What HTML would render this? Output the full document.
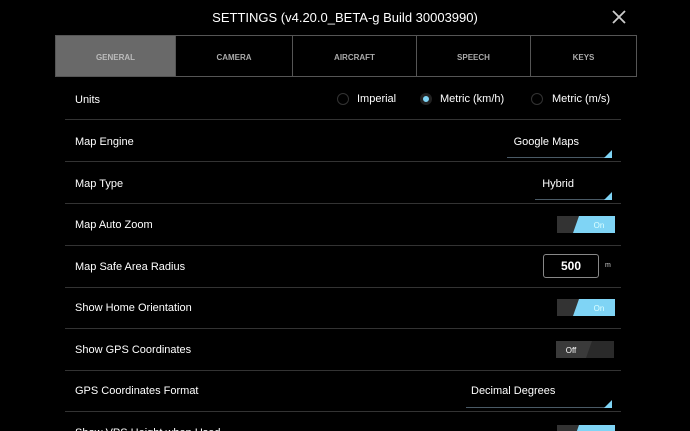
<!DOCTYPE html>
<html><head><style>
*{margin:0;padding:0;box-sizing:border-box}
html,body{width:690px;height:431px;overflow:hidden}
body{background:#000;position:relative;font-family:"Liberation Sans",sans-serif;color:#fff}
.a{position:absolute}
.title{left:0;width:690px;top:10px;text-align:center;font-size:13px}
.tab{top:35px;height:42px;border:1px solid #555;font-size:8px;color:#aaa;text-align:center;line-height:43px;font-weight:bold}
.lab{left:75px;font-size:11px}
.sep{left:65px;width:556px;height:1px;background:#333}
.dd{font-size:11px;text-align:right}
.ul{height:1px;background:#4a5a66}
.tri{width:0;height:0;border-left:8px solid transparent;border-bottom:8px solid #7fd4f5}
.rad{width:12px;height:12px;border-radius:50%;border:1px solid #333;top:93px}
.rt{top:93px;font-size:11px}
</style></head><body>
<div class="a title">SETTINGS (v4.20.0_BETA-g Build 30003990)</div>
<svg class="a" style="left:612px;top:10px" width="14" height="14"><path d="M1 1L13 13M13 1L1 13" stroke="#ccc" stroke-width="1.8"/></svg>
<div class="a tab" style="left:55px;width:121px;background:#696969;color:#bbb">GENERAL</div>
<div class="a tab" style="left:175px;width:118px">CAMERA</div>
<div class="a tab" style="left:292px;width:125px">AIRCRAFT</div>
<div class="a tab" style="left:416px;width:115px">SPEECH</div>
<div class="a tab" style="left:530px;width:107px">KEYS</div>

<div class="a lab" style="top:94px">Units</div>
<div class="a rad" style="left:337px"></div><div class="a rt" style="left:357px">Imperial</div>
<div class="a rad" style="left:420px;border:3px solid #222;background:#7fd4f5"></div><div class="a rt" style="left:440px">Metric (km/h)</div>
<div class="a rad" style="left:531px"></div><div class="a rt" style="left:552px">Metric (m/s)</div>
<div class="a sep" style="top:119px"></div>

<div class="a lab" style="top:136px">Map Engine</div>
<div class="a dd" style="right:111px;top:136px">Google Maps</div>
<div class="a ul" style="left:507px;width:105px;top:157px"></div><div class="a tri" style="left:604px;top:150px"></div>
<div class="a sep" style="top:161px"></div>

<div class="a lab" style="top:178px">Map Type</div>
<div class="a dd" style="right:116px;top:178px">Hybrid</div>
<div class="a ul" style="left:535px;width:77px;top:199px"></div><div class="a tri" style="left:604px;top:192px"></div>
<div class="a sep" style="top:203px"></div>

<div class="a lab" style="top:219px">Map Auto Zoom</div>
<svg class="a" style="left:557px;top:216px" width="58" height="17"><rect width="58" height="17" fill="#333"/><path d="M22 0H58V17H16Z" fill="#7fd4f5"/><text x="42" y="12" font-size="8" fill="#dff" text-anchor="middle" font-family="Liberation Sans">On</text></svg>
<div class="a sep" style="top:245px"></div>

<div class="a lab" style="top:261px">Map Safe Area Radius</div>
<div class="a" style="left:543px;top:254px;width:56px;height:24px;border:1px solid #888;border-radius:3px;text-align:center;line-height:23px;font-size:12px;font-weight:bold">500</div>
<div class="a" style="left:605px;top:262px;font-size:7px;color:#ccc">m</div>
<div class="a sep" style="top:287px"></div>

<div class="a lab" style="top:302px">Show Home Orientation</div>
<svg class="a" style="left:557px;top:299px" width="58" height="17"><rect width="58" height="17" fill="#333"/><path d="M22 0H58V17H16Z" fill="#7fd4f5"/><text x="42" y="12" font-size="8" fill="#dff" text-anchor="middle" font-family="Liberation Sans">On</text></svg>
<div class="a sep" style="top:328px"></div>

<div class="a lab" style="top:344px">Show GPS Coordinates</div>
<svg class="a" style="left:556px;top:341px" width="58" height="17"><rect width="58" height="17" fill="#2a2a2a"/><path d="M0 0H36L30 17H0Z" fill="#3a3a3a"/><text x="15" y="12" font-size="8" fill="#fff" text-anchor="middle" font-family="Liberation Sans">Off</text></svg>
<div class="a sep" style="top:370px"></div>

<div class="a lab" style="top:385px">GPS Coordinates Format</div>
<div class="a dd" style="left:471px;top:385px">Decimal Degrees</div>
<div class="a ul" style="left:466px;width:146px;top:407px"></div><div class="a tri" style="left:604px;top:400px"></div>
<div class="a sep" style="top:411px"></div>

<div class="a lab" style="top:427px">Show VPS Height when Used</div>
<svg class="a" style="left:557px;top:425px" width="58" height="17"><rect width="58" height="17" fill="#333"/><path d="M22 0H58V17H16Z" fill="#7fd4f5"/></svg>
</body></html>
